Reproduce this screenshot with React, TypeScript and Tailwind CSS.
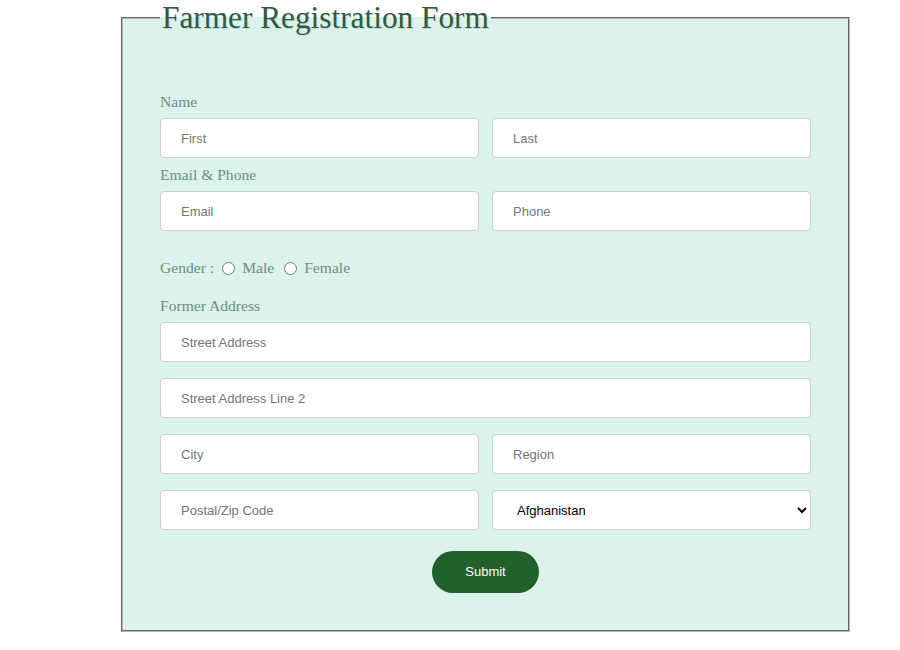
import { useState } from 'react';

const inputCls =
  "h-10 w-full rounded-[4px] border border-[#cfcfcf] bg-white pl-5 font-['Liberation_Sans',Arial,sans-serif] text-[13px] text-black placeholder:text-[#757575] focus:outline-none";

const labelCls = "block font-['Liberation_Serif','Times_New_Roman',serif] text-[15.6px] leading-5 text-[#6b8f7d]";

export default function App() {
  const [gender, setGender] = useState('');

  return (
    <div className="min-h-[650px] w-[900px] bg-white">
      <form onSubmit={(e) => e.preventDefault()} className="pl-[121px]">
        <fieldset className="w-[729px] border-2 border-[#b8b8b8] bg-[#dcf2ec] px-[37px] pb-[37px] [border-style:groove]">
          <legend className="px-[2px] font-['Liberation_Serif','Times_New_Roman',serif] text-[31.3px] leading-[36px] text-[#2e5c43] [text-shadow:1px_1px_1px_rgba(0,0,0,0.12)]">
            Farmer Registration Form
          </legend>

          <label className={`${labelCls} mt-[56px]`}>Name</label>
          <div className="mt-[6px] grid grid-cols-2 gap-[13px]">
            <input className={inputCls} placeholder="First" />
            <input className={inputCls} placeholder="Last" />
          </div>

          <label className={`${labelCls} mt-[7px]`}>Email &amp; Phone</label>
          <div className="mt-[6px] grid grid-cols-2 gap-[13px]">
            <input className={inputCls} placeholder="Email" />
            <input className={inputCls} placeholder="Phone" />
          </div>

          <div className={`${labelCls} mt-[27px] flex items-center`}>
            <span>Gender :</span>
            <input
              type="radio"
              name="gender"
              checked={gender === 'm'}
              onChange={() => setGender('m')}
              className="ml-[8px] mr-[7px] h-[13px] w-[13px] appearance-auto"
            />
            <span>Male</span>
            <input
              type="radio"
              name="gender"
              checked={gender === 'f'}
              onChange={() => setGender('f')}
              className="ml-[10px] mr-[7px] h-[13px] w-[13px] appearance-auto"
            />
            <span>Female</span>
          </div>

          <label className={`${labelCls} mt-[18px]`}>Former Address</label>
          <div className="mt-[6px] flex flex-col gap-4">
            <input className={inputCls} placeholder="Street Address" />
            <input className={inputCls} placeholder="Street Address Line 2" />
            <div className="grid grid-cols-2 gap-[13px]">
              <input className={inputCls} placeholder="City" />
              <input className={inputCls} placeholder="Region" />
            </div>
            <div className="grid grid-cols-2 gap-[13px]">
              <input className={inputCls} placeholder="Postal/Zip Code" />
              <select className={`${inputCls} appearance-auto pl-5 pr-1`} defaultValue="Afghanistan">
                <option>Afghanistan</option>
                <option>Albania</option>
                <option>Algeria</option>
              </select>
            </div>
          </div>

          <div className="mt-[21px] flex justify-center">
            <button
              type="submit"
              className="h-[42px] w-[107px] rounded-full bg-[#21602a] font-['Liberation_Sans',Arial,sans-serif] text-[13px] text-white"
            >
              Submit
            </button>
          </div>
        </fieldset>
      </form>
    </div>
  );
}
